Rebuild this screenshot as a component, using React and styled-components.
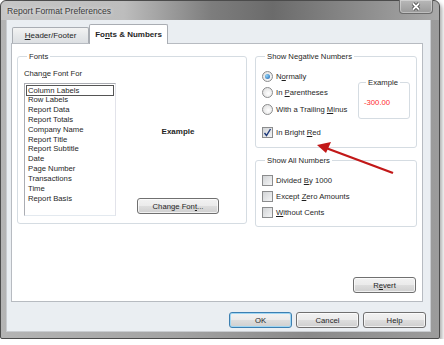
import React from "react";
import styled, { createGlobalStyle } from "styled-components";

const GlobalStyle = createGlobalStyle`
  html, body {
    margin: 0;
    padding: 0;
    background: #ffffff;
  }
  body {
    font-family: "Liberation Sans", Arial, sans-serif;
    font-size: 7.7px;
    color: #1f1f1f;
  }
`;

const Window = styled.div`
  position: relative;
  box-sizing: border-box;
  width: 440px;
  height: 339px;
  display: flex;
  flex-direction: column;
  padding: 0 8px 6px 5px;
  border: 1px solid #4b4b4b;
  border-radius: 6px 6px 2px 2px;
  background: linear-gradient(to right, #b4b4b4, #a3a3a3 40%, #8a8a8a 70%, #9c9c9c);
  box-shadow: 2px 3px 4px rgba(0, 0, 0, 0.35);
`;

const TitleBar = styled.div`
  height: 19px;
  display: flex;
  align-items: center;
  justify-content: space-between;
  margin: 0 -8px 0 -5px;
  padding: 0 6px 0 6px;
  border-radius: 6px 6px 0 0;
  background: linear-gradient(
    to right,
    #c6c6c6 0%,
    #bdbdbd 28%,
    #7d7d7d 48%,
    #6b6b6b 62%,
    #858585 78%,
    #a9a9a9 100%
  );
`;

const Title = styled.span`
  font-size: 8.6px;
  color: #3b3b3b;
  text-shadow: 0 0 4px rgba(255, 255, 255, 0.9);
  margin-top: 1px;
`;

const CloseButton = styled.div`
  align-self: flex-start;
  width: 32px;
  height: 13px;
  margin-top: -1px;
  display: flex;
  align-items: center;
  justify-content: center;
  border: 1px solid #6c6c6c;
  border-top: none;
  border-radius: 0 0 4px 4px;
  background: linear-gradient(#b8b8b8, #9a9a9a);
  box-shadow: inset 0 0 0 1px rgba(255, 255, 255, 0.35);
`;

const Client = styled.div`
  flex: 1;
  display: flex;
  flex-direction: column;
  padding: 4px 7px 0 4px;
  background: #eaeef2;
  border: 1px solid #c9ccd0;
  border-top: none;
`;

const TabRow = styled.div`
  height: 19px;
  display: flex;
  align-items: flex-end;
  padding-left: 1px;
`;

const Tab = styled.div`
  box-sizing: border-box;
  position: relative;
  z-index: ${(p) => (p.$active ? 2 : 1)};
  width: ${(p) => (p.$active ? 79 : 77)}px;
  height: ${(p) => (p.$active ? 20 : 16)}px;
  margin-bottom: ${(p) => (p.$active ? -1 : 0)}px;
  display: flex;
  align-items: center;
  justify-content: center;
  border: 1px solid #a9adb3;
  border-bottom: none;
  border-radius: 2px 2px 0 0;
  font-size: 8px;
  font-weight: ${(p) => (p.$active ? "bold" : "normal")};
  background: ${(p) =>
    p.$active ? "#ffffff" : "linear-gradient(#f3f3f3, #e6e8ea 50%, #dcdfe2)"};
  padding-bottom: ${(p) => (p.$active ? 1 : 0)}px;
`;

const Panel = styled.div`
  box-sizing: border-box;
  height: 259px;
  display: flex;
  gap: 8px;
  padding: 8px 5px 8px 5px;
  background: #ffffff;
  border: 1px solid #b7bbc1;
`;

const Group = styled.fieldset`
  box-sizing: border-box;
  margin: 0;
  min-width: 0;
  width: ${(p) => p.$w}px;
  height: ${(p) => p.$h}px;
  padding: ${(p) => p.$pad || "0 6px"};
  border: 1px solid #d5dce2;
  border-radius: 3px;
`;

const Legend = styled.legend`
  padding: 0 2px;
  margin-left: 3px;
  line-height: 9px;
  font-size: 7.7px;
`;

const FontsBody = styled.div`
  display: flex;
  padding-top: 8px;
`;

const ListColumn = styled.div`
  width: 92px;
  display: flex;
  flex-direction: column;
`;

const Label = styled.div`
  height: 9px;
  line-height: 9px;
  margin-bottom: 5px;
`;

const ListBox = styled.div`
  box-sizing: border-box;
  height: 133px;
  padding: 1px;
  border: 1px solid #828790;
  border-color: #abadb3 #e2e3ea #e3e9ef #abadb3;
`;

const ListItem = styled.div`
  box-sizing: border-box;
  line-height: 9.9px;
  padding-left: 1px;
  border: 1px solid ${(p) => (p.$focus ? "#555" : "transparent")};
  border-width: ${(p) => (p.$focus ? "1px" : "0 1px")};
  height: ${(p) => (p.$focus ? 11 : 9.9)}px;
  margin-bottom: ${(p) => (p.$focus ? -1 : 0)}px;
  white-space: nowrap;
`;

const PreviewColumn = styled.div`
  flex: 1;
  display: flex;
  flex-direction: column;
  align-items: center;
`;

const PreviewText = styled.div`
  margin-top: 58px;
  font-weight: bold;
  font-size: 8px;
`;

const Button = styled.button`
  box-sizing: border-box;
  width: ${(p) => p.$w || 63}px;
  height: 16px;
  padding: 0;
  font-family: "Liberation Sans", Arial, sans-serif;
  font-size: 7.7px;
  color: #1f1f1f;
  border: 1px solid ${(p) => (p.$default ? "#3c7fb1" : "#707070")};
  border-radius: 3px;
  background: linear-gradient(#f2f2f2 0%, #ebebeb 48%, #dddddd 52%, #cfcfcf 100%);
  box-shadow: ${(p) =>
    p.$default
      ? "inset 0 0 0 1px #9fd6f3"
      : "inset 0 0 0 1px rgba(255,255,255,0.7)"};
`;

const FontButton = styled(Button)`
  margin-top: 62px;
`;

const RightColumn = styled.div`
  width: 162px;
  display: flex;
  flex-direction: column;
  gap: 8.5px;
`;

const NegBody = styled.div`
  display: flex;
  justify-content: space-between;
  padding-top: 7px;
`;

const OptionList = styled.div`
  display: flex;
  flex-direction: column;
`;

const Option = styled.div`
  height: ${(p) => p.$h || 16.5}px;
  display: flex;
  align-items: center;
  gap: 3px;
  margin-top: ${(p) => p.$mt || 0}px;
  white-space: nowrap;
`;

const Radio = styled.span`
  box-sizing: border-box;
  width: 11px;
  height: 11px;
  border-radius: 50%;
  border: 1px solid #8b8c8d;
  background: radial-gradient(circle at 60% 60%, #ffffff, #d9d9d9);
  display: flex;
  align-items: center;
  justify-content: center;
  &::after {
    content: "";
    display: ${(p) => (p.$on ? "block" : "none")};
    width: 5px;
    height: 5px;
    border-radius: 50%;
    background: radial-gradient(circle at 35% 35%, #8fd4f7, #1d5fae);
  }
`;

const Check = styled.span`
  box-sizing: border-box;
  width: 11px;
  height: 11px;
  border: 1px solid #8b8c8d;
  background: linear-gradient(135deg, #d2d4d6, #f4f5f6);
  display: flex;
  align-items: center;
  justify-content: center;
`;

const ExampleBox = styled(Group)`
  margin-top: 10px;
`;

const RedValue = styled.div`
  color: #ff2a2a;
  padding-top: 11px;
  padding-left: 1px;
`;

const AllBody = styled.div`
  padding-top: 7px;
`;

const RevertButton = styled(Button)`
  margin-top: auto;
  align-self: flex-end;
  margin-right: 1px;
`;

const Footer = styled.div`
  display: flex;
  justify-content: flex-end;
  gap: 4px;
  margin: 10px -3px 0 0;
`;

const ArrowLayer = styled.svg`
  position: absolute;
  left: -1px;
  top: -1px;
  pointer-events: none;
`;

const listItems = [
  "Column Labels",
  "Row Labels",
  "Report Data",
  "Report Totals",
  "Company Name",
  "Report Title",
  "Report Subtitle",
  "Date",
  "Page Number",
  "Transactions",
  "Time",
  "Report Basis",
];

function CheckMark() {
  return (
    <svg width="9" height="9" viewBox="0 0 9 9">
      <path d="M1.5 5 L3.5 7.5 L7.5 1" fill="none" stroke="#1f3a7a" strokeWidth="1.4" />
    </svg>
  );
}

export default function App() {
  return (
    <>
      <GlobalStyle />
      <Window>
        <TitleBar>
          <Title>Report Format Preferences</Title>
          <CloseButton>
            <svg width="10" height="9" viewBox="0 0 10 9">
              <path d="M2 1.5 L8 7.5 M8 1.5 L2 7.5" stroke="#3d3d3d" strokeWidth="3.4" />
              <path d="M2 1.5 L8 7.5 M8 1.5 L2 7.5" stroke="#ffffff" strokeWidth="1.8" />
            </svg>
          </CloseButton>
        </TitleBar>
        <Client>
          <TabRow>
            <Tab>
              <span>
                <u>H</u>eader/Footer
              </span>
            </Tab>
            <Tab $active>
              <span>
                Fo<u>n</u>ts &amp; Numbers
              </span>
            </Tab>
          </TabRow>
          <Panel>
            <Group $w={232} $h={172}>
              <Legend>Fonts</Legend>
              <FontsBody>
                <ListColumn>
                  <Label>
                    Chan<u>g</u>e Font For
                  </Label>
                  <ListBox>
                    {listItems.map((item, i) => (
                      <ListItem key={item} $focus={i === 0}>
                        {item}
                      </ListItem>
                    ))}
                  </ListBox>
                </ListColumn>
                <PreviewColumn>
                  <PreviewText>Example</PreviewText>
                  <FontButton $w={82}>
                    Change Fon<u>t</u>...
                  </FontButton>
                </PreviewColumn>
              </FontsBody>
            </Group>
            <RightColumn>
              <Group $w={162} $h={95.5}>
                <Legend>Show Negative Numbers</Legend>
                <NegBody>
                  <OptionList>
                    <Option>
                      <Radio $on />
                      <span>
                        N<u>o</u>rmally
                      </span>
                    </Option>
                    <Option>
                      <Radio />
                      <span>
                        In <u>P</u>arentheses
                      </span>
                    </Option>
                    <Option>
                      <Radio />
                      <span>
                        With a Trailing <u>M</u>inus
                      </span>
                    </Option>
                    <Option $mt={7}>
                      <Check>
                        <CheckMark />
                      </Check>
                      <span>
                        In Bright <u>R</u>ed
                      </span>
                    </Option>
                  </OptionList>
                  <ExampleBox $w={52} $h={41} $pad="0 4px">
                    <Legend>Example</Legend>
                    <RedValue>-300.00</RedValue>
                  </ExampleBox>
                </NegBody>
              </Group>
              <Group $w={162} $h={70.5}>
                <Legend>Show All Numbers</Legend>
                <AllBody>
                  <Option $h={16}>
                    <Check />
                    <span>
                      Divided <u>B</u>y 1000
                    </span>
                  </Option>
                  <Option $h={16}>
                    <Check />
                    <span>
                      Except <u>Z</u>ero Amounts
                    </span>
                  </Option>
                  <Option $h={16}>
                    <Check />
                    <span>
                      <u>W</u>ithout Cents
                    </span>
                  </Option>
                </AllBody>
              </Group>
              <RevertButton>
                R<u>e</u>vert
              </RevertButton>
            </RightColumn>
          </Panel>
          <Footer>
            <Button $default>OK</Button>
            <Button>Cancel</Button>
            <Button>Help</Button>
          </Footer>
        </Client>
        <ArrowLayer width="444" height="345" viewBox="0 0 444 345">
          <line x1="393" y1="173" x2="326" y2="148" stroke="#c21818" strokeWidth="2.4" />
          <polygon points="317,145 331,142 326,153" fill="#c21818" />
        </ArrowLayer>
      </Window>
    </>
  );
}
